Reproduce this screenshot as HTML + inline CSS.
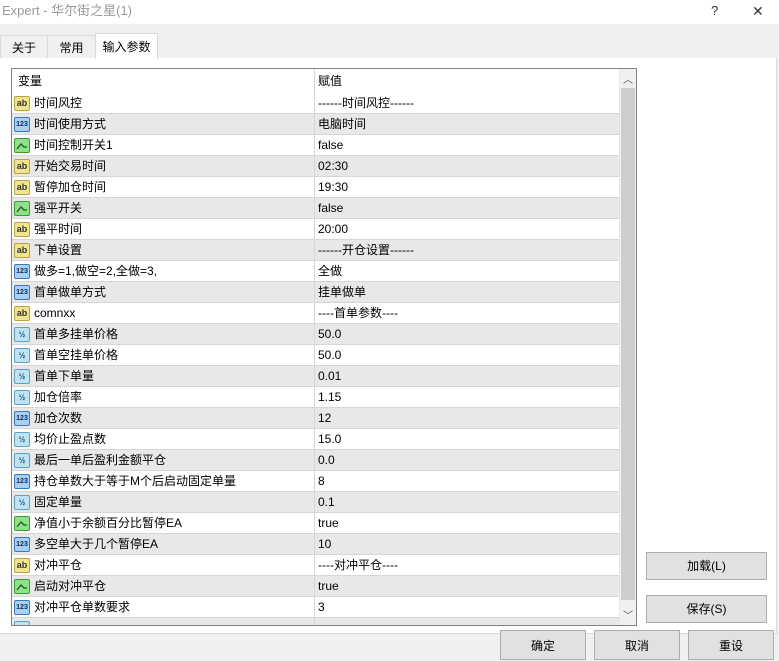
<!DOCTYPE html>
<html><head><meta charset="utf-8"><style>
*{margin:0;padding:0;box-sizing:border-box}
body{width:779px;height:657px;overflow:hidden;background:#f0f0f0;font-family:"Liberation Sans","Noto Sans CJK SC",sans-serif;font-size:12px;color:#000;position:relative}
.abs{position:absolute}
.title{left:0;top:0;width:779px;height:24px;background:#fff;color:#999;font-size:13px;line-height:22px;padding-left:2px}
.tab{top:35px;height:24px;border:1px solid #d9d9d9;border-bottom:none;background:#f0f0f0;line-height:24px;text-align:center}
.panel{left:0;top:58px;width:777px;height:576px;background:#fff;border-right:1px solid #d9d9d9;border-bottom:1px solid #d9d9d9}
.table{left:11px;top:68px;width:626px;height:558px;border:1px solid #828282;overflow:hidden;background:#fff}
.row{position:absolute;left:0;width:607px;height:21px;border-bottom:1px solid #d6d6d6;line-height:21px}
.row.g{background:#e8e8e8}
.c1{position:absolute;left:22px;top:0}
.c2{position:absolute;left:306px;top:0}
.div{position:absolute;left:302px;top:0;width:1px;height:560px;background:#d6d6d6}
.ic{position:absolute;left:2px;top:3px;width:16px;height:15px;border-radius:2px;font-size:9px;line-height:13px;text-align:center;font-weight:bold}
.ab{background:#f2e391;border:1px solid #b9a33c;color:#333}
.n{background:#a9d0f0;border:1px solid #3b78b5;color:#0b2d63;font-size:7px}
.b{background:#8fe08a;border:1px solid #3c9a36}
.d{background:#bfe3f2;border:1px solid #5aa2c4;color:#1d4e75;font-size:8px}
.btn{background:#e1e1e1;border:1px solid #adadad;text-align:center;line-height:26px}
</style></head><body>
<div class="abs title">Expert - 华尔街之星(1)<span class="abs" style="left:711px;top:0;color:#333">?</span><span class="abs" style="left:752px;top:0;color:#333;font-size:14px">✕</span></div>
<div class="abs tab" style="left:0;width:48px">关于</div>
<div class="abs tab" style="left:47px;width:49px">常用</div>
<div class="abs panel"></div>
<div class="abs tab" style="left:95px;top:33px;width:63px;height:26px;background:#fff;line-height:26px">输入参数</div>
<div class="abs table">
<div class="row" style="top:0;height:24px;line-height:24px;border-bottom:none"><span class="c1" style="left:6px">变量</span><span class="c2">赋值</span></div>
<div id="rows"></div>
<div class="div"></div>
<div class="abs" style="left:607px;top:0;width:17px;height:558px;background:#f0f0f0;border-left:1px solid #e6e6e6">
<div class="abs" style="left:3px;top:2px;font-size:10px;color:#555">︿</div>
<div class="abs" style="left:1px;top:19px;width:14px;height:512px;background:#cdcdcd"></div>
<div class="abs" style="left:3px;top:538px;font-size:10px;color:#555">﹀</div>
</div>
</div>
<div class="abs btn" style="left:646px;top:552px;width:121px;height:28px">加载(L)</div>
<div class="abs btn" style="left:646px;top:595px;width:121px;height:28px">保存(S)</div>
<div class="abs btn" style="left:500px;top:630px;width:86px;height:30px;line-height:30px">确定</div>
<div class="abs btn" style="left:594px;top:630px;width:86px;height:30px;line-height:30px">取消</div>
<div class="abs btn" style="left:688px;top:630px;width:86px;height:30px;line-height:30px">重设</div>
<script>
var d=[["ab","时间风控","------时间风控------"],["n","时间使用方式","电脑时间"],["b","时间控制开关1","false"],["ab","开始交易时间","02:30"],["ab","暂停加仓时间","19:30"],["b","强平开关","false"],["ab","强平时间","20:00"],["ab","下单设置","------开仓设置------"],["n","做多=1,做空=2,全做=3,","全做"],["n","首单做单方式","挂单做单"],["ab","comnxx","----首单参数----"],["d","首单多挂单价格","50.0"],["d","首单空挂单价格","50.0"],["d","首单下单量","0.01"],["d","加仓倍率","1.15"],["n","加仓次数","12"],["d","均价止盈点数","15.0"],["d","最后一单后盈利金额平仓","0.0"],["n","持仓单数大于等于M个后启动固定单量","8"],["d","固定单量","0.1"],["b","净值小于余额百分比暂停EA","true"],["n","多空单大于几个暂停EA","10"],["ab","对冲平仓","----对冲平仓----"],["b","启动对冲平仓","true"],["n","对冲平仓单数要求","3"],["d","",""]];
var t={ab:"ab",n:"123",b:'<svg width="14" height="13" viewBox="0 0 14 13"><path d="M2 10 L6 5 L9 8 L12 8" stroke="#1b5e17" stroke-width="1.3" fill="none"/></svg>',d:"½"};
var h="";d.forEach(function(r,i){h+='<div class="row'+(i%2?' g':'')+'" style="top:'+(24+i*21)+'px"><div class="ic '+r[0]+'">'+t[r[0]]+'</div><span class="c1">'+r[1]+'</span><span class="c2">'+r[2]+'</span></div>';});
document.getElementById("rows").innerHTML=h;
</script>
</body></html>
